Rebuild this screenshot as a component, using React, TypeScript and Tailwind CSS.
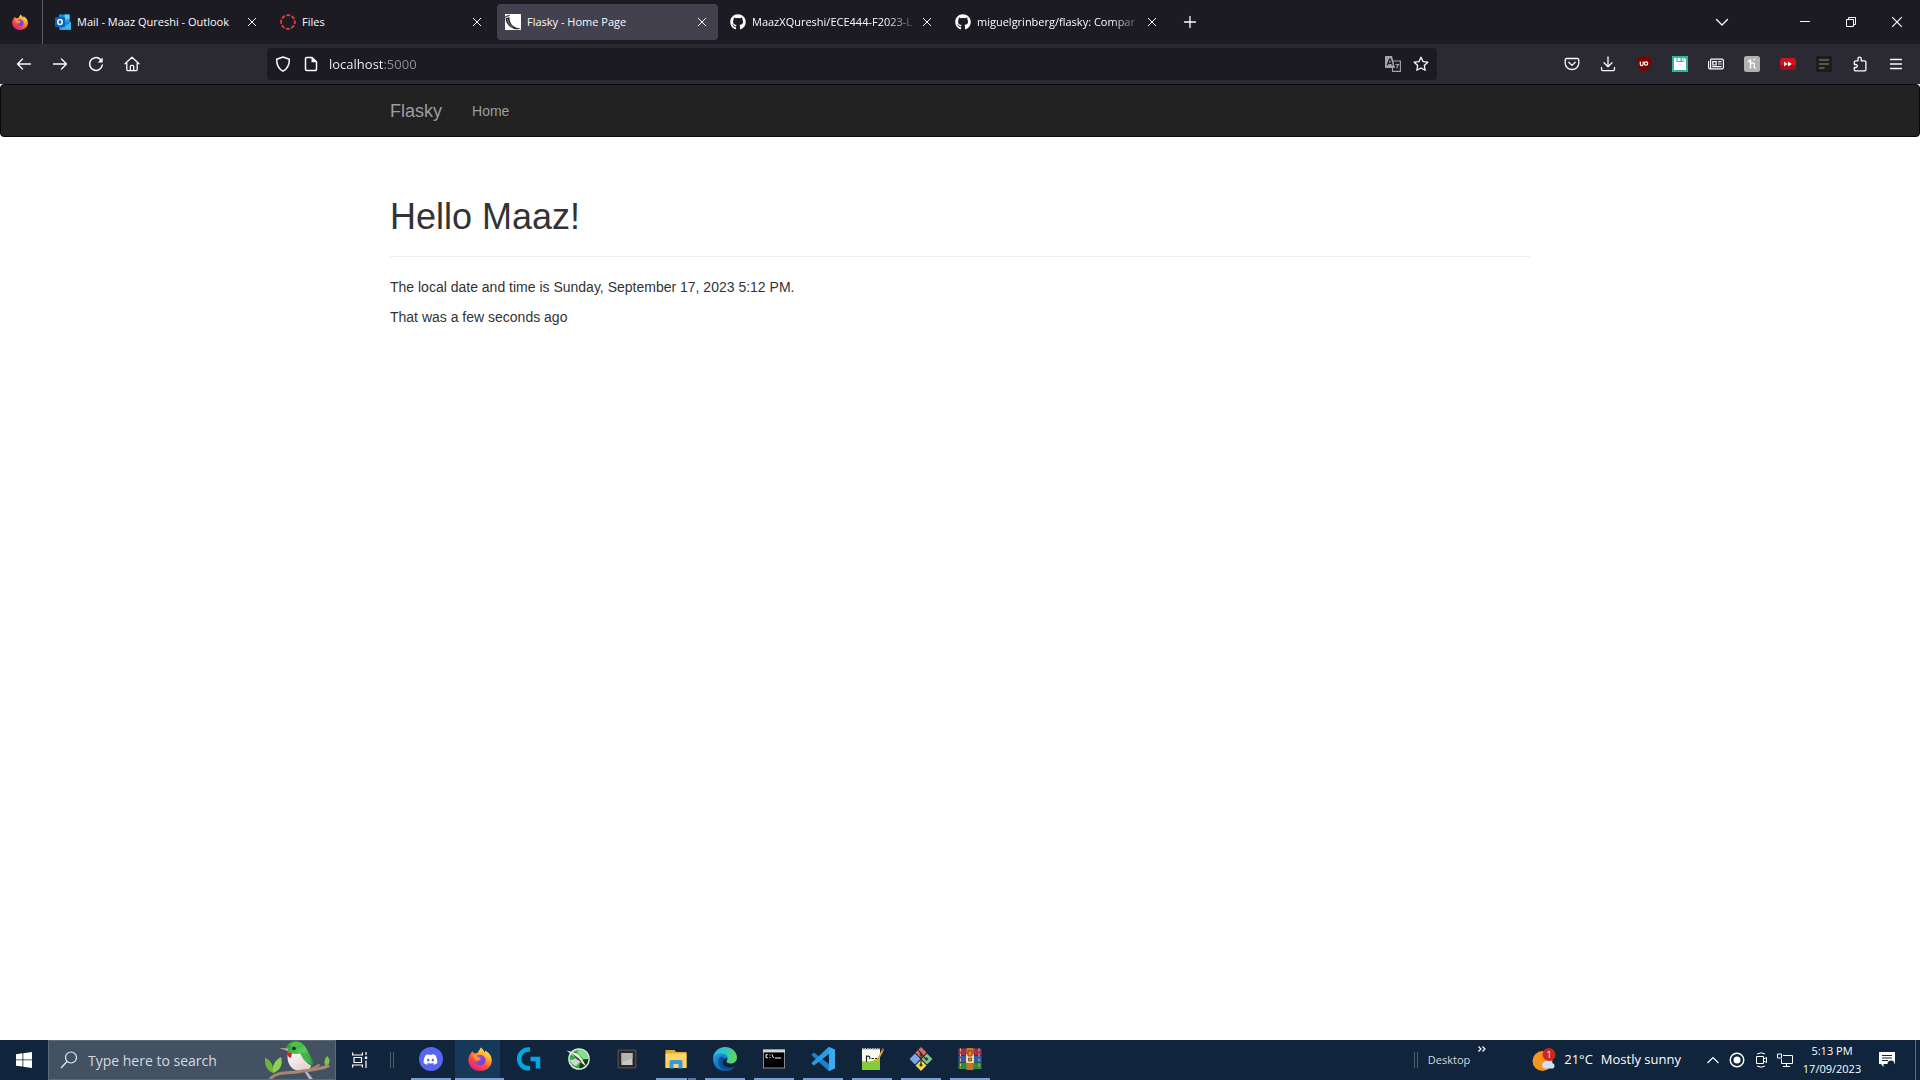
import React from 'react';
import { FaGithub, FaDiscord } from 'react-icons/fa';

const UI = "font-['Open_Sans',sans-serif]";

type IconProps = { className?: string };

function Firefox({ className, id }: { className?: string; id: string }) {
  return (
    <svg viewBox="0 0 24 24" className={className} aria-hidden="true">
      <defs>
        <linearGradient id={id + 'a'} x1="0.85" y1="0.05" x2="0.25" y2="0.95">
          <stop offset="0" stopColor="#fff44f" />
          <stop offset="0.3" stopColor="#ffb52e" />
          <stop offset="0.6" stopColor="#ff5a36" />
          <stop offset="1" stopColor="#e9187c" />
        </linearGradient>
        <linearGradient id={id + 'b'} x1="0" y1="0" x2="1" y2="1">
          <stop offset="0" stopColor="#b14bf0" />
          <stop offset="1" stopColor="#5b3fd0" />
        </linearGradient>
      </defs>
      <path d="M4.6 4.2C5 5.2 5.6 6 6.6 6.5c1-.5 2-.6 3-.5C10.600 3.600 12.200 2.200 12.800.6c1.800 1.300 3 2.900 3.700 4.800.6-.5.8-1.200.8-1.900 4 2.300 6.500 5.800 6.500 10C23.800 19.400 18.700 24 12 24S.3 19.100.3 13C.3 9.600 2.300 6.500 4.600 4.200z" fill={`url(#${id}a)`} />
      <path d="M8.200 8.600c2.300-1 3.900-.2 5.200-.9 2.400 1 4.100 3.100 4.100 5.600 0 3-2.400 5.200-5.400 5.200-3.300 0-5.700-2.200-5.700-5 1.400 1.300 3.500 1.400 5 .3l2-1.300c-1.800.2-4.600-1.300-5.200-3.900z" fill={`url(#${id}b)`} />
      <path d="M4.500 8.500c1.500-1 3-.9 4.200-.2 0 1.500 1.600 2.400 3.800 2.500-.3 1.500-2.600 1.700-3.100 3-2-.2-4-2.300-4.900-5.300z" fill="#ff9a2c" />
    </svg>
  );
}

function Outlook({ className }: IconProps) {
  return (
    <svg viewBox="0 0 16 16" className={className} aria-hidden="true">
      <path d="M4 0.500h10.500V9H4z" fill="#1490df" />
      <path d="M9.500.5h5V5h-5z" fill="#50d9ff" />
      <path d="M9.500 5h5v4h-5z" fill="#28a8ea" />
      <path d="M4 7.500h12v8.200H4z" fill="#1a8ad4" />
      <path d="M16 8v7.700H5z" fill="#35b8f1" />
      <rect y="3" width="10" height="10" rx="1" fill="#0a5fb8" />
      <ellipse cx="5" cy="8" rx="2.200" ry="2.500" fill="none" stroke="#fff" strokeWidth="1.500" />
    </svg>
  );
}

function Canvas({ className }: IconProps) {
  return (
    <svg viewBox="0 0 16 16" className={className} aria-hidden="true">
      <circle cx="8" cy="8" r="6.900" fill="none" stroke="#e0403a" strokeWidth="1.900" strokeDasharray="3.900 1.520" strokeDashoffset="1.900" />
    </svg>
  );
}

function Flask({ className }: IconProps) {
  return (
    <svg viewBox="0 0 16 16" className={className} aria-hidden="true">
      <path d="M0 0h16v16H0z" fill="#fff" />
      <path d="M0 3.200l4.500-2" fill="none" stroke="#444" strokeWidth="1.400" />
      <path d="M.5 4.500L4.500 3c-.3 4.500 2 9 7 10.800 1.500.5 3 .7 4.500.7-1.500.9-4 1-6.500.4C4 13.500 1 9 .5 4.500z" fill="#222" />
      <path d="M2.500 5c.5 3.500 2.500 6.500 5.500 8.300" fill="none" stroke="#aaa" strokeWidth=".8" />
    </svg>
  );
}

function Cross({ className }: IconProps) {
  return (
    <svg viewBox="0 0 10 10" className={className} fill="none" stroke="currentColor" strokeWidth="1" aria-hidden="true">
      <path d="M1 1l8 8M9 1L1 9" />
    </svg>
  );
}

function Line({ d, className = 'size-4', w = 1.5 }: { d: string; className?: string; w?: number }) {
  return (
    <svg viewBox="0 0 16 16" className={className} fill="none" stroke="currentColor" strokeWidth={w} strokeLinecap="round" strokeLinejoin="round" aria-hidden="true">
      <path d={d} />
    </svg>
  );
}

type TabData = { title: string; icon: React.ReactNode; active?: boolean; fade?: boolean };

const tabs: TabData[] = [
  { title: 'Mail - Maaz Qureshi - Outlook', icon: <Outlook className="size-4" /> },
  { title: 'Files', icon: <Canvas className="size-4" /> },
  { title: 'Flasky - Home Page', icon: <Flask className="size-4" />, active: true },
  { title: 'MaazXQureshi/ECE444-F2023-L', icon: <FaGithub className="size-4" />, fade: true },
  { title: 'miguelgrinberg/flasky: Compar', icon: <FaGithub className="size-4" />, fade: true },
];

function Tab({ title, icon, active, fade }: TabData) {
  return (
    <div className={`flex h-9 w-[221px] min-w-0 items-center rounded px-2 ${active ? 'bg-[#42414d]' : ''}`}>
      <button role="tab" aria-selected={!!active} className="flex min-w-0 flex-1 items-center gap-1.5 text-left">
        <span className="shrink-0">{icon}</span>
        <span className={`flex-1 whitespace-nowrap text-[11px] ${fade ? 'mask-r-from-80% mask-r-to-100%' : ''}`}>{title}</span>
      </button>
      <button aria-label={`Close ${title}`} className="grid size-4 shrink-0 place-items-center">
        <Cross className="size-[10px]" />
      </button>
    </div>
  );
}

function TabStrip() {
  return (
    <header className="flex h-11 items-center bg-[#1c1b22]">
      <button aria-label="Firefox View" className="grid h-full w-[43px] shrink-0 place-items-center border-r border-[#5b5b66] pr-0.5">
        <Firefox id="fxs" className="size-4" />
      </button>
      <div role="tablist" className="flex min-w-0 gap-1 pl-1">
        {tabs.map((t) => (
          <Tab key={t.title} {...t} />
        ))}
      </div>
      <button aria-label="New tab" className="ml-1 grid size-9 shrink-0 place-items-center">
        <Line d="M8 2.500v11M2.500 8h11" w={1.3} />
      </button>
      <div className="ml-auto flex h-full items-center">
        <button aria-label="List all tabs" className="mr-[42px] grid size-9 place-items-center">
          <Line d="M2.500 5.500L8 11l5.500-5.500" w={1.3} />
        </button>
        <button aria-label="Minimize" className="grid h-full w-[46px] place-items-center">
          <Line d="M3.500 7.500h9" w={1} />
        </button>
        <button aria-label="Restore" className="grid h-full w-[46px] place-items-center">
          <svg viewBox="0 0 12 12" className="size-3" fill="none" stroke="currentColor" aria-hidden="true">
            <path d="M1.500 3.500h7v7h-7zM3.500 3.500v-2h7v7h-2" />
          </svg>
        </button>
        <button aria-label="Close window" className="grid h-full w-[46px] place-items-center">
          <Cross className="size-3" />
        </button>
      </div>
    </header>
  );
}

const navButtons: { label: string; icon: React.ReactNode }[] = [
  { label: 'Back', icon: <Line d="M14.500 8H1.500M6.500 3l-5 5 5 5" w={1.3} /> },
  { label: 'Forward', icon: <Line d="M1.500 8h13M9.500 3l5 5-5 5" w={1.3} /> },
  {
    label: 'Reload',
    icon: (
      <svg viewBox="0 0 16 16" className="size-4" fill="none" stroke="currentColor" strokeWidth="1.500" strokeLinecap="round" aria-hidden="true">
        <path d="M14.300 9A6.400 6.400 0 1 1 12.400 3.400" />
        <path d="M14.700 1.500v5h-5z" fill="currentColor" stroke="none" />
      </svg>
    ),
  },
  { label: 'Home', icon: <Line d="M1 7.800L8 1.200l7 6.600M2.800 7v6.500a1.200 1.200 0 0 0 1.200 1.200h8a1.200 1.200 0 0 0 1.200-1.200V7M6.300 14.500V10.500a1.200 1.200 0 0 1 1.200-1.200h1a1.200 1.200 0 0 1 1.200 1.200v4" w={1.3} /> },
];

const extensions: { label: string; icon: React.ReactNode }[] = [
  { label: 'Pocket', icon: <Line d="M2.500 2.500h11a1.300 1.300 0 0 1 1.300 1.300v3.400a6.800 6.300 0 0 1-13.600 0V3.800a1.300 1.300 0 0 1 1.300-1.300zM4.800 6.300L8 9.400l3.200-3.100" w={1.3} /> },
  { label: 'Downloads', icon: <Line d="M8 1v9.500M4 6.800l4 4 4-4M1.500 11.500v1.700a1.500 1.500 0 0 0 1.500 1.500h10a1.500 1.500 0 0 0 1.500-1.500v-1.700" w={1.3} /> },
  {
    label: 'uBlock Origin',
    icon: (
      <svg viewBox="0 0 16 16" className="size-4" aria-hidden="true">
        <path d="M8 0c2 1.300 4.500 1.800 7 1.800C15 9 13.500 13 8 16 2.500 13 1 9 1 1.800 3.500 1.800 6 1.300 8 0z" fill="#800000" />
        <path d="M4.300 5.500v2.700a1.400 1.400 0 0 0 2.800 0V5.500" fill="none" stroke="#fff" strokeWidth="1.200" />
        <circle cx="10" cy="7.500" r="1.700" fill="none" stroke="#fff" strokeWidth="1.200" />
      </svg>
    ),
  },
  {
    label: 'Save page',
    icon: (
      <svg viewBox="0 0 16 16" className="size-4" aria-hidden="true">
        <path d="M0 0h16v16H0z" fill="#2fb5a8" />
        <path d="M2 2h2.500v4h7V2h1L14 3.500V14H2z" fill="#fff" />
        <path d="M5.500 2h3v3h-3zM9.800 2h1v3h-1z" fill="#fff" />
      </svg>
    ),
  },
  {
    label: 'News reader',
    icon: (
      <svg viewBox="0 0 16 16" className="size-4" fill="none" stroke="currentColor" strokeWidth="1.200" aria-hidden="true">
        <path d="M2.600 3.200h11.600a1.200 1.200 0 0 1 1.200 1.200v7.200a1.200 1.200 0 0 1-1.200 1.200H1.800A1.200 1.200 0 0 1 .6 11.600V5M2.600 3.200v9.600M4.800 5.700h3.400V9H4.800zM10 5.600h3.500M10 8h3.500M4.300 10.600h9.200" />
      </svg>
    ),
  },
  {
    label: 'Honey',
    icon: (
      <svg viewBox="0 0 16 16" className="size-4" aria-hidden="true">
        <rect width="16" height="16" rx="2.500" fill="#b1b1b3" />
        <path d="M6.500 3v9.500M3.800 5.500l3.500-1M6.500 8.500c1-2 3.800-2.300 3.800 0 0 1.500-.8 3.300 1.200 3.700M9.500 4l1.500-1" fill="none" stroke="#fff" strokeWidth="1.400" />
      </svg>
    ),
  },
  {
    label: 'Video speed',
    icon: (
      <svg viewBox="0 0 16 16" className="size-4" aria-hidden="true">
        <rect y="2" width="16" height="12" rx="3" fill="#d3121f" />
        <path d="M0 9h16v2a3 3 0 0 1-3 3H3a3 3 0 0 1-3-3z" fill="#a50d18" />
        <path d="M4 5.500L7.500 8 4 10.500zM8 5.500L11.800 8 8 10.500z" fill="#fff" />
      </svg>
    ),
  },
  {
    label: 'Notes',
    icon: (
      <svg viewBox="0 0 16 16" className="size-4" aria-hidden="true">
        <rect width="16" height="16" rx="1" fill="#1d1d1d" />
        <path d="M3 4h10M3 8h10M3 12h5.500" stroke="#6a6c60" strokeWidth="1.400" />
      </svg>
    ),
  },
  { label: 'Extensions', icon: <Line d="M2.300 6.200a1.400 1.400 0 0 1 1.400-1.400H6V2.700a1.600 1.600 0 0 1 3.200 0V4.800h3.300a1.400 1.400 0 0 1 1.400 1.400v7.300a1.400 1.400 0 0 1-1.400 1.400H3.700a1.400 1.400 0 0 1-1.400-1.400V11.500h1.500a1.500 1.500 0 0 0 0-3H2.300z" w={1.3} /> },
  { label: 'Menu', icon: <Line d="M2.500 3.500h11M2.500 8h11M2.500 12.500h11" w={1.3} /> },
];

function Toolbar() {
  return (
    <div className="flex h-10 items-center bg-[#2b2a33] px-1.5">
      <nav className="flex shrink-0">
        {navButtons.map((b) => (
          <button key={b.label} aria-label={b.label} className="grid h-8 w-9 place-items-center">
            {b.icon}
          </button>
        ))}
      </nav>
      <div className="flex-1" />
      <div className="min-w-0 flex-[10]">
        <div className="flex h-8 items-center rounded bg-[#1c1b22] px-2">
          <button aria-label="Site protection">
            <Line d="M8 1l6.300 2.200c.2 5-1.600 9.500-6.300 12-4.700-2.500-6.500-7-6.300-12z" />
          </button>
          <button aria-label="Site information" className="ml-3">
            <svg viewBox="0 0 16 16" className="size-4" aria-hidden="true">
              <path d="M3.700 1.500h5.300l4.500 4.300v7.500a1.200 1.200 0 0 1-1.200 1.200H3.700a1.200 1.200 0 0 1-1.200-1.200V2.700a1.200 1.200 0 0 1 1.200-1.200z" fill="none" stroke="currentColor" strokeWidth="1.500" />
              <path d="M8.500 1.200V6.300h5.300z" fill="currentColor" />
            </svg>
          </button>
          <input
            aria-label="Address"
            defaultValue="localhost:5000"
            className="ml-2.5 min-w-0 flex-1 bg-linear-to-r from-[#fbfbfe] from-[54px] to-[#8f8f9a] to-[54px] bg-clip-text pt-0.5 text-[13px] text-transparent outline-none"
          />
          <button aria-label="Translate this page" className="mr-3">
            <svg viewBox="0 0 16 16" className="size-4" aria-hidden="true">
              <path d="M8 5h7.400v10.400H7.500V12" fill="none" stroke="#a3a3a8" strokeWidth="1.100" />
              <path d="M0 0h7l3 12H0z" fill="#a3a3a8" />
              <path d="M2.300 9.300L4.500 3.200h.8l2 6.100M3 7.300h3.600" fill="none" stroke="#1c1b22" strokeWidth="1.200" />
              <path d="M10.500 8.500h3l-1.500 2.500v1.500" fill="none" stroke="#a3a3a8" strokeWidth="1.200" />
            </svg>
          </button>
          <button aria-label="Bookmark this page">
            <Line d="M8 1.200l2 4.400 4.800.6-3.500 3.300.9 4.800L8 12l-4.200 2.300.9-4.800L1.200 6.200 6 5.600z" w={1.3} />
          </button>
        </div>
      </div>
      <div className="flex-1" />
      <div className="flex shrink-0">
        {extensions.map((b) => (
          <button key={b.label} aria-label={b.label} className="grid h-8 w-9 place-items-center">
            {b.icon}
          </button>
        ))}
      </div>
    </div>
  );
}

function Page() {
  return (
    <main className="flex-1 bg-white font-['Liberation_Sans',Arial,sans-serif] text-sm text-[#333]">
      <nav className="rounded border border-[#080808] bg-[#222]">
        <div className="mx-auto flex h-[51px] max-w-[1170px] items-center gap-[30px] px-[15px] text-[#9d9d9d]">
          <a href="#" className="text-lg">Flasky</a>
          <a href="#">Home</a>
        </div>
      </nav>
      <div className="mx-auto mt-5 max-w-[1170px] px-[15px]">
        <div className="mb-5 mt-[60px] border-b border-[#eee] pb-[19px]">
          <h1 className="text-4xl font-medium leading-10">Hello Maaz!</h1>
        </div>
        <p className="mb-2.5">The local date and time is Sunday, September 17, 2023 5:12 PM.</p>
        <p>That was a few seconds ago</p>
      </div>
    </main>
  );
}

function Bird({ className }: IconProps) {
  return (
    <svg viewBox="0 0 66 38" className={className} aria-hidden="true">
      <defs>
        <linearGradient id="breast" x1="0" y1="0" x2="0.6" y2="1">
          <stop offset="0" stopColor="#ffffff" />
          <stop offset="1" stopColor="#e6cfcf" />
        </linearGradient>
        <linearGradient id="plume" x1="0" y1="0" x2="1" y2="1">
          <stop offset="0" stopColor="#1f8f3c" />
          <stop offset="0.5" stopColor="#5ccb52" />
          <stop offset="1" stopColor="#1d7a35" />
        </linearGradient>
      </defs>
      <path d="M41 29l7 9h-4l-5-8z" fill="#b9b4bb" />
      <path d="M8 32C2 30-.5 24 0 17c6 2 9 8 8 15z" fill="#6db53a" />
      <path d="M8 32c-1-7 1-12 8-16 2 7 0 13-8 16z" fill="#8ed152" />
      <path d="M61 25c-3-4-1-7 1-10 4 4 3 8-1 10z" fill="#7cc743" />
      <path d="M23 11c-2 9 2 18 11 19 7 1 12-1 12-6 0-8-7-14-13-15z" fill="url(#breast)" />
      <path d="M21 9C21 3 27-.5 32 .5c7 1 9 6 12 12 2 4 5 8 5 12-4 1-10-4-14-12-4 1-10 1-14-3.500z" fill="url(#plume)" />
      <path d="M24 4c4-4 10-4 13-1-3 3-9 4-13 1z" fill="#4fc04a" />
      <path d="M36 11c6 2 10 8 11 12-6-1-10-6-11-12z" fill="#3fb34d" />
      <path d="M22 10c1 1 3 2 5 2l-1 5c-3-1-5-4-4-7z" fill="#d8202a" />
      <path d="M23 7.500l-9-.5 9 3z" fill="#d4a09a" />
      <circle cx="29" cy="7.500" r="1.800" fill="#123018" />
      <path d="M6 37c6-6 16-5 26-6 12-2 21-2 31-6" fill="none" stroke="#a88672" strokeWidth="3" strokeLinecap="round" />
      <path d="M43 30l11-6" fill="none" stroke="#a88672" strokeWidth="2" strokeLinecap="round" />
    </svg>
  );
}

type App = { label: string; icon: React.ReactNode; open?: boolean; active?: boolean; stacked?: boolean };

const apps: App[] = [
  {
    label: 'Discord',
    open: true,
    icon: (
      <span className="grid size-6 place-items-center rounded-full bg-[#5865f2]">
        <FaDiscord className="size-[15px] text-white" />
      </span>
    ),
  },
  { label: 'Firefox', open: true, active: true, icon: <Firefox id="fxt" className="size-6" /> },
  {
    label: 'Logitech G HUB',
    icon: (
      <svg viewBox="0 0 24 24" className="size-6" fill="none" stroke="#00a8e1" strokeWidth="4.500" aria-hidden="true">
        <path d="M13 2.500h-1.500a9.300 9.300 0 0 0 0 18.800H13M13.500 12H21v9.500" />
      </svg>
    ),
  },
  {
    label: 'MSI Afterburner',
    icon: (
      <svg viewBox="0 0 24 24" className="size-6" aria-hidden="true">
        <circle cx="13" cy="12" r="10.800" fill="#dfe5df" />
        <circle cx="13" cy="12" r="9.300" fill="#2fae43" />
        <path d="M13 2.700a9.300 9.300 0 0 1 9.300 9.300h-5L11 5z" fill="#86e08a" />
        <path d="M13 21.300a9.300 9.300 0 0 0 9.300-9.300L15 13z" fill="#143a1c" />
        <path d="M.5 3.500L12 7l4 5 4 7-6-4-7-1 3-3z" fill="#f4f6f4" />
        <path d="M4 13l6-1 4 3-4 4-4-2z" fill="#cfd6d0" />
        <path d="M5 5.500l8 6 4 5-6-4z" fill="#3a4a3d" />
      </svg>
    ),
  },
  {
    label: 'Hardware monitor',
    icon: (
      <svg viewBox="0 0 24 24" className="size-6" aria-hidden="true">
        <rect x="2.500" y="2.500" width="19" height="19" fill="#4a4541" />
        <rect x="4" y="4" width="16" height="16" fill="#2a2827" />
        <rect x="6.500" y="6" width="11" height="12" fill="#c9c9c9" />
        <path d="M6.500 6h11v5l-11 5z" fill="#b4b4b4" />
      </svg>
    ),
  },
  {
    label: 'File Explorer',
    open: true,
    stacked: true,
    icon: (
      <svg viewBox="0 0 24 24" className="size-6" aria-hidden="true">
        <path d="M1.500 3h9l1.500 2h10.500v16h-21z" fill="#e9a92e" />
        <path d="M1.500 6.500h21V21h-21z" fill="#fcd766" />
        <path d="M5.500 21.500v-7a1.500 1.500 0 0 1 1.500-1.500h10a1.500 1.500 0 0 1 1.500 1.500v7h-4V17h-5v4.500z" fill="#3b97d9" />
      </svg>
    ),
  },
  {
    label: 'Microsoft Edge',
    open: true,
    icon: (
      <svg viewBox="0 0 24 24" className="size-6" aria-hidden="true">
        <defs>
          <linearGradient id="eg1" x1="0" y1="0.300" x2="1" y2="0.500">
            <stop offset="0" stopColor="#2bb5e8" />
            <stop offset="0.500" stopColor="#30c7c0" />
            <stop offset="1" stopColor="#63d957" />
          </linearGradient>
          <linearGradient id="eg2" x1="0" y1="0" x2="0.600" y2="1">
            <stop offset="0" stopColor="#1b9de2" />
            <stop offset="1" stopColor="#1260b0" />
          </linearGradient>
        </defs>
        <path d="M0 12C0 5 5.500 0 12 0s12 4.700 12 10.500c0 3.500-2.700 6-6.200 6-2.600 0-4.300-.8-4.300-2 0-.9 1-1.300 1-3 0-2.500-2.500-4.500-5.500-4.500-5 0-8 2.500-9 5z" fill="url(#eg1)" />
        <path d="M0 12c.5-3.500 4-5.500 8-5.500 3.500 0 6.300 2 6.500 4.700-3-.2-5.200 1.500-5.200 4.100 0 3.400 3.200 5.600 7 5.600 2.200 0 3.800-.4 5.500-1.500C19.700 22.300 16 24 12 24 5 24 0 18.500 0 12z" fill="url(#eg2)" />
        <path d="M8 9.500C5.800 11 5 13 5.200 15.500c.3 4 3.600 7.300 7.800 8.400 3.800-.1 7-2 8.800-4.500-6.500 3-12.500.3-12.500-4.100 0-1.700.8-3 2-3.700C10.500 10 9.500 9.300 8 9.500z" fill="#0d4f96" />
      </svg>
    ),
  },
  {
    label: 'Command Prompt',
    open: true,
    icon: (
      <svg viewBox="0 0 24 24" className="size-6" aria-hidden="true">
        <path d="M1 2.500h22v19H1z" fill="#8b8b8b" />
        <path d="M1 2.500h22v3H1z" fill="#d6d6d6" />
        <path d="M2 5.500h20v15H2z" fill="#000" />
        <path d="M5.800 7.700H4v3h1.800M8 7.500v1M8 10v1M10 7.500l1.500 3.500M13 11h6" fill="none" stroke="#fff" strokeWidth="1" />
      </svg>
    ),
  },
  {
    label: 'Visual Studio Code',
    open: true,
    icon: (
      <svg viewBox="0 0 24 24" className="size-6" aria-hidden="true">
        <path d="M17.500 0L24 2.800v18.400L17.500 24 1 8.600c-.5-.5-.5-1 0-1.500l1.300-1.200c.4-.3.9-.3 1.300 0L18 17V0z" fill="#1b81c9" />
        <path d="M17.500 24L24 21.200V2.800L17.500 0 1 15.400c-.5.500-.5 1 0 1.500l1.300 1.200c.4.300.9.300 1.300 0L18 7v17z" fill="#2a9be4" />
        <path d="M18 0l6 2.800v18.400L18 24z" fill="#3aabf0" />
      </svg>
    ),
  },
  {
    label: 'Notepad++',
    open: true,
    icon: (
      <svg viewBox="0 0 24 24" className="size-6" aria-hidden="true">
        <path d="M2 2h18v21H2z" fill="#f6f9ec" />
        <path d="M2 14c6 2 12 0 18-4v13H2z" fill="#83cc3c" />
        <path d="M2 2h18" stroke="#b9b9b9" strokeWidth="2" strokeDasharray="1.500 1" />
        <path d="M6.500 15V8.500M6.500 9.500c3-1 4 .5 3 2.500M11.500 11.500h2.500M15 11.500h2.500" fill="none" stroke="#222" strokeWidth="1.200" />
        <path d="M22.500 1.500L16 14l-1 3 2.500-2L24 3z" fill="#e0a92c" />
        <path d="M21.300 3.500l1.500-2.500L24 2l-1.300 2.500z" fill="#c0503a" />
      </svg>
    ),
  },
  {
    label: 'Git Bash',
    open: true,
    icon: (
      <svg viewBox="0 0 24 24" className="size-6" aria-hidden="true">
        <path d="M12 0l5.500 5.500L12 11 6.500 5.500z" fill="#e9685f" />
        <path d="M6 6.500l5.500 5.500L6 17.500.5 12z" fill="#7da7ea" />
        <path d="M18 6.500l5.500 5.500-5.500 5.500-5.500-5.500z" fill="#83c285" />
        <path d="M12 13l5.500 5.500L12 24l-5.500-5.500z" fill="#f5d44d" />
        <path d="M9 3l3 3v12M12 7l5 5" fill="none" stroke="#333" strokeWidth="1.200" />
        <circle cx="12" cy="7" r="1.500" fill="#333" />
        <circle cx="12" cy="18" r="1.500" fill="#333" />
        <circle cx="17.500" cy="12" r="1.500" fill="#333" />
      </svg>
    ),
  },
  {
    label: 'WinRAR',
    open: true,
    icon: (
      <svg viewBox="0 0 24 24" className="size-6" aria-hidden="true">
        <path d="M.5 1.500h23v6.500H.5z" fill="#a32c54" />
        <path d="M.5 8.500h23V15H.5z" fill="#3458b5" />
        <path d="M.5 15.500h23V22H.5z" fill="#2f8a3e" />
        <path d="M2.500 1.500v20.500M21 1.500v20.500" stroke="#d9c079" strokeWidth="1" strokeDasharray="3 2" />
        <path d="M8.500 1h7v22h-7z" fill="#c9722a" />
        <path d="M8 7.500h8V16H8z" fill="#f0d9a8" />
        <path d="M10 4h4v5h-4zM10.500 11h3v3h-3z" fill="#e08b2a" stroke="#6b3a12" strokeWidth=".8" />
      </svg>
    ),
  },
];

function Taskbar() {
  return (
    <footer className="flex h-10 items-stretch bg-[#10253b]">
      <button aria-label="Start" className="grid w-12 place-items-center">
        <svg viewBox="0 0 16 16" className="size-4" fill="#fff" aria-hidden="true">
          <path d="M0 2.200l6.500-.9v6.200H0zM7.300 1.200L16 0v7.500H7.300zM0 8.300h6.500v6.300L0 13.700zM7.300 8.300H16V16l-8.700-1.200z" />
        </svg>
      </button>
      <label className="flex w-72 items-center border border-[#5c6b7a] bg-[#425263] pl-[11px] pr-1">
        <svg viewBox="0 0 18 18" className="size-[18px] shrink-0" fill="none" stroke="#e8ecf0" strokeWidth="1.200" aria-hidden="true">
          <circle cx="11" cy="6.500" r="5.500" />
          <path d="M7 10.500L1 17" />
        </svg>
        <input aria-label="Search" placeholder="Type here to search" className="ml-2.5 min-w-0 flex-1 pt-0.5 text-sm placeholder-[#d5dae0] outline-none" />
        <Bird className="h-[38px] w-[66px] shrink-0" />
      </label>
      <button aria-label="Task View" className="grid w-12 place-items-center">
        <svg viewBox="0 0 16 16" className="size-4" fill="none" stroke="#fff" strokeWidth="1.200" aria-hidden="true">
          <path d="M.6.500v2.500h9.800V.5M.6 15.500V13h9.800v2.500M2 5.500h7.500v5H2zM14 0v3M14 8.500V16" />
          <path d="M12.800 4.500h2.400v2.500h-2.400z" fill="#fff" stroke="none" />
        </svg>
      </button>
      <div className="my-3 ml-1.5 w-1 border-x border-[#4a5a6c]" />
      <div className="ml-3 flex">
        {apps.map((a) => (
          <button key={a.label} aria-label={a.label} className={`flex w-[49px] flex-col items-center ${a.active ? 'bg-linear-to-r from-[#16395a] from-[92%] to-[#10253b] to-[92%]' : ''}`}>
            <span className="grid flex-1 place-items-center">{a.icon}</span>
            <span className="flex h-0.5 w-full justify-center gap-px">
              {a.open && <span className={a.stacked ? 'w-[31px] bg-[#7ba0cf]' : a.active ? 'w-full bg-[#7ba0cf]' : 'w-10 bg-[#7ba0cf]'} />}
              {a.stacked && <span className="w-2 bg-[#55779f]" />}
            </span>
          </button>
        ))}
      </div>
      <div className="ml-auto flex items-center text-white">
        <div className="h-4 w-1 border-x border-[#4a5a6c]" />
        <button className="ml-2.5 text-[11px] text-[#d5dae0]">Desktop</button>
        <button aria-label="More" className="ml-2 self-start pt-1.5">
          <svg viewBox="0 0 8 6" className="h-1.5 w-2" fill="none" stroke="#fff" strokeWidth="1.200" aria-hidden="true">
            <path d="M.5.500L3 3 .5 5.500M4.500.500L7 3 4.500 5.500" />
          </svg>
        </button>
        <button className="ml-[46px] flex items-center gap-2 text-[13px]">
          <svg viewBox="0 0 24 24" className="size-6" aria-hidden="true">
            <circle cx="10.500" cy="13" r="10" fill="#f7941f" />
            <path d="M12 20.500a3.500 3.500 0 0 1 .5-6.500 4.500 4.500 0 0 1 8 1 3 3 0 0 1 .5 5.500z" fill="#cfe0f7" />
            <circle cx="17" cy="6.500" r="6.500" fill="#c8281e" />
            <text x="17" y="10" textAnchor="middle" fontSize="9" fill="#fff">1</text>
          </svg>
          <span>21°C</span>
          <span>Mostly sunny</span>
        </button>
        <button aria-label="Show hidden icons" className="ml-6 grid w-4 place-items-center">
          <svg viewBox="0 0 12 8" className="h-2 w-3" fill="none" stroke="currentColor" strokeWidth="1.200" aria-hidden="true">
            <path d="M.5 7L6 1.500 11.500 7" />
          </svg>
        </button>
        <button aria-label="Recorder" className="ml-2">
          <svg viewBox="0 0 16 16" className="size-4" aria-hidden="true">
            <circle cx="8" cy="8" r="6.800" fill="none" stroke="#fff" strokeWidth="1.400" />
            <circle cx="8" cy="8" r="3.500" fill="#fff" />
          </svg>
        </button>
        <button aria-label="Meet now" className="ml-2">
          <svg viewBox="0 0 16 16" className="size-4" fill="none" stroke="currentColor" aria-hidden="true">
            <path d="M4 2Q8-.5 12 2M4 14q4 2.500 8 0M3.500 4.500h7v7h-7zM10.500 7l3-1.500v5l-3-1.500" />
          </svg>
        </button>
        <button aria-label="Network" className="ml-2">
          <svg viewBox="0 0 16 16" className="size-4" fill="none" stroke="currentColor" aria-hidden="true">
            <path d="M6 3.500h9.500v8H4.500V7M.5 2h4v4h-4zM9.500 11.500v3M6 14.500h7" />
          </svg>
        </button>
        <button className="ml-1.5 w-[66px] text-center text-[11px] leading-[18px]">
          <span className="block">5:13 PM</span>
          <span className="block">17/09/2023</span>
        </button>
        <button aria-label="Notifications" className="ml-3.5">
          <svg viewBox="0 0 16 16" className="size-4" aria-hidden="true">
            <path d="M0 0h16v12H4.500v3L2 12H0z" fill="#fff" />
            <path d="M3 3.500h10M3 6h10M3 8.500h6" stroke="#10253b" />
            <circle cx="12" cy="12" r="3.500" fill="#10253b" />
            <path d="M13.500 9a3 3 0 1 1-4 4.500 3 3 0 0 0 4-4.500z" fill="#fff" />
          </svg>
        </button>
        <button aria-label="Show desktop" className="ml-5 h-10 w-[5px] border-l border-[#5c6b7a]" />
      </div>
    </footer>
  );
}

export default function App() {
  return (
    <div className={`flex min-h-screen flex-col text-[#fbfbfe] ${UI}`}>
      <TabStrip />
      <Toolbar />
      <Page />
      <Taskbar />
    </div>
  );
}
